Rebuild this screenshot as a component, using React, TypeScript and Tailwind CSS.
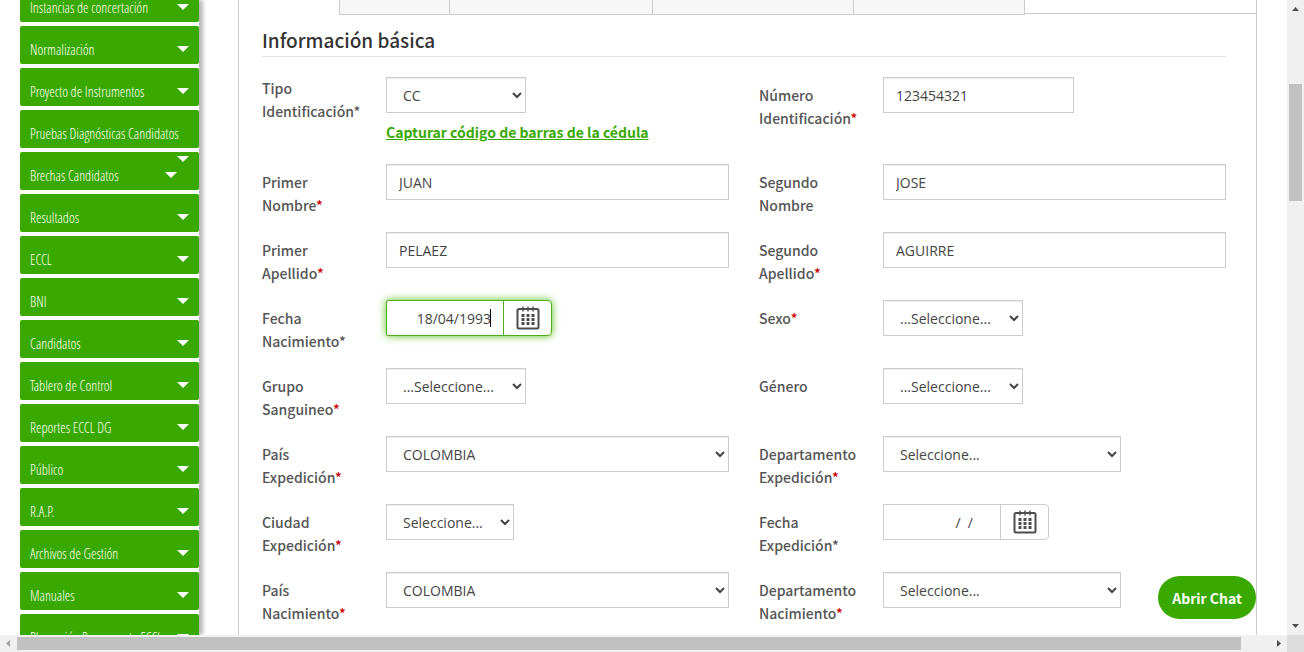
import { useId, type ReactNode } from "react";

const menu: { text: string; arrow?: "normal" | "none" | "double" }[] = [
  { text: "Instancias de concertación" },
  { text: "Normalización" },
  { text: "Proyecto de Instrumentos" },
  { text: "Pruebas Diagnósticas Candidatos", arrow: "none" },
  { text: "Brechas Candidatos", arrow: "double" },
  { text: "Resultados" },
  { text: "ECCL" },
  { text: "BNI" },
  { text: "Candidatos" },
  { text: "Tablero de Control" },
  { text: "Reportes ECCL DG" },
  { text: "Público" },
  { text: "R.A.P." },
  { text: "Archivos de Gestión" },
  { text: "Manuales" },
  { text: "Planeación Presupuesto ECCL" },
];

const box =
  "h-9 rounded-none border border-[#ccc] bg-white font-['Open_Sans',sans-serif] text-sm text-[#444] shadow-[inset_0_1px_1px_rgba(0,0,0,0.075)]";

function Caret() {
  return (
    <svg width="12" height="6" viewBox="0 0 12 6" fill="#fff" aria-hidden="true">
      <path d="M0 0h12L6 6z" />
    </svg>
  );
}

function Sidebar() {
  return (
    <nav className="ml-5 w-[179px] shrink-0 overflow-visible bg-white shadow-[4px_0_4px_#b8b8b8]">
      <ul className="-mt-4 flex flex-col gap-1">
        {menu.map(({ text, arrow = "normal" }) => (
          <li key={text} className="relative">
            <a
              href="#"
              className="flex h-[38px] items-center justify-between whitespace-nowrap rounded-xs bg-[#39a900] pl-2.5 pr-2.5 pt-2 font-['Open_Sans_Condensed_Light','Open_Sans_Condensed','Liberation_Sans_Narrow',sans-serif] text-sm font-light text-white"
            >
              <span className="pt-0.5">{text}</span>
              {arrow === "normal" && <Caret />}
              {arrow === "double" && (
                <span className="mr-3">
                  <Caret />
                </span>
              )}
            </a>
            {arrow === "double" && (
              <span className="absolute right-2.5 top-1 flex">
                <Caret />
              </span>
            )}
          </li>
        ))}
      </ul>
    </nav>
  );
}

interface FieldProps {
  label: [string, string?];
  star?: "red" | "plain";
  top?: boolean;
  children: (id: string) => ReactNode;
}

function Field({ label, star, top, children }: FieldProps) {
  const id = useId();
  return (
    <div className="flex min-w-0">
      <label
        htmlFor={id}
        className={`w-[124px] shrink-0 font-['Noto_Sans_CJK_SC',sans-serif] text-sm font-medium leading-[23px] text-[#555] ${top ? "" : "pt-[7px]"}`}
      >
        {label[0]}
        {label[1] && <br />}
        {label[1]}
        {star && <span className={star === "red" ? "text-[#c00]" : ""}>*</span>}
      </label>
      <div className="min-w-0 flex-1">{children(id)}</div>
    </div>
  );
}

function Select({ id, value, width }: { id: string; value: string; width: string }) {
  return (
    <select id={id} className={`${box} ${width} block pl-3 pr-0.5`}>
      <option>{value}</option>
    </select>
  );
}

function Text({ id, value, width = "w-full" }: { id: string; value: string; width?: string }) {
  return <input id={id} type="text" defaultValue={value} className={`${box} ${width} block px-3`} />;
}

function Calendar() {
  return (
    <svg width="24" height="24" viewBox="0 0 24 24" aria-hidden="true">
      <rect x="1.5" y="3" width="21" height="19.5" rx="1.5" fill="none" stroke="#4d4d4d" strokeWidth="2" />
      <path d="M7 .5v5M12 .5v5M17 .5v5" stroke="#4d4d4d" strokeWidth="1.4" />
      <path
        d="M5.5 8h3v3h-3zM10.5 8h3v3h-3zM15.5 8h3v3h-3zM5.5 12h3v3h-3zM10.5 12h3v3h-3zM15.5 12h3v3h-3zM5.5 16h3v3h-3zM10.5 16h3v3h-3zM15.5 16h3v3h-3z"
        fill="#4d4d4d"
      />
    </svg>
  );
}

function DateField({ id, value, active }: { id: string; value: string; active?: boolean }) {
  return (
    <div
      className={`flex h-9 w-[166px] rounded-r border bg-white ${active ? "rounded-l-xs border-[#4cae1a] shadow-[0_0_8px_#5cc01f]" : "border-[#ccc]"}`}
    >
      <div className={`relative w-[117px] border-r ${active ? "border-[#4cae1a]" : "border-[#ccc]"}`}>
        <input
          id={id}
          type="text"
          defaultValue={value}
          className={`h-full w-full whitespace-pre bg-transparent text-right font-['Open_Sans',sans-serif] text-sm text-[#444] outline-none ${active ? "px-3" : "px-[27px]"}`}
        />
        {active && <span className="absolute right-3 top-2 h-[18px] w-px bg-black" />}
      </div>
      <button type="button" aria-label="Calendario" className="flex flex-1 items-center justify-center">
        <Calendar />
      </button>
    </div>
  );
}

function Row({ first, children }: { first?: boolean; children: ReactNode }) {
  return (
    <div className={`grid grid-cols-2 gap-[30px] ${first ? "min-h-[87px]" : "min-h-[68px]"}`}>{children}</div>
  );
}

function Form() {
  return (
    <form className="pt-5">
      <Row first>
        <Field label={["Tipo", "Identificación"]} star="plain" top>
          {(id) => (
            <>
              <Select id={id} value="CC" width="w-[140px]" />
              <a
                href="#"
                className="mt-2 block whitespace-nowrap font-['Noto_Sans_CJK_SC',sans-serif] text-sm font-bold leading-[23px] text-[#39a900] underline"
              >
                Capturar código de barras de la cédula
              </a>
            </>
          )}
        </Field>
        <Field label={["Número", "Identificación"]} star="red">
          {(id) => <Text id={id} value="123454321" width="w-[191px]" />}
        </Field>
      </Row>
      <Row>
        <Field label={["Primer", "Nombre"]} star="red">{(id) => <Text id={id} value="JUAN" />}</Field>
        <Field label={["Segundo", "Nombre"]}>{(id) => <Text id={id} value="JOSE" />}</Field>
      </Row>
      <Row>
        <Field label={["Primer", "Apellido"]} star="red">{(id) => <Text id={id} value="PELAEZ" />}</Field>
        <Field label={["Segundo", "Apellido"]} star="red">{(id) => <Text id={id} value="AGUIRRE" />}</Field>
      </Row>
      <Row>
        <Field label={["Fecha", "Nacimiento"]} star="plain">
          {(id) => <DateField id={id} value="18/04/1993" active />}
        </Field>
        <Field label={["Sexo"]} star="red">
          {(id) => <Select id={id} value="...Seleccione..." width="w-[140px]" />}
        </Field>
      </Row>
      <Row>
        <Field label={["Grupo", "Sanguineo"]} star="red">
          {(id) => <Select id={id} value="...Seleccione..." width="w-[140px]" />}
        </Field>
        <Field label={["Género"]}>{(id) => <Select id={id} value="...Seleccione..." width="w-[140px]" />}</Field>
      </Row>
      <Row>
        <Field label={["País", "Expedición"]} star="red">
          {(id) => <Select id={id} value="COLOMBIA" width="w-full" />}
        </Field>
        <Field label={["Departamento", "Expedición"]} star="red">
          {(id) => <Select id={id} value="Seleccione..." width="w-[238px]" />}
        </Field>
      </Row>
      <Row>
        <Field label={["Ciudad", "Expedición"]} star="red">
          {(id) => <Select id={id} value="Seleccione..." width="w-[128px]" />}
        </Field>
        <Field label={["Fecha", "Expedición"]} star="plain">{(id) => <DateField id={id} value="/  /" />}</Field>
      </Row>
      <Row>
        <Field label={["País", "Nacimiento"]} star="red">
          {(id) => <Select id={id} value="COLOMBIA" width="w-full" />}
        </Field>
        <Field label={["Departamento", "Nacimiento"]} star="red">
          {(id) => <Select id={id} value="Seleccione..." width="w-[238px]" />}
        </Field>
      </Row>
    </form>
  );
}

function Tabs() {
  return (
    <div className="flex h-[15px]" aria-hidden="true">
      <div className="w-[100px]" />
      <div className="w-[110px] border-b border-l border-[#ccc] bg-[#f7f7f7]" />
      <div className="w-[203px] border-b border-l border-[#ccc] bg-[#f7f7f7]" />
      <div className="w-[201px] border-b border-l border-[#ccc] bg-[#f7f7f7]" />
      <div className="w-[172px] border-x border-b border-[#ccc] bg-[#f7f7f7]" />
      <div className="mb-px flex-1 border-b border-[#ccc]" />
    </div>
  );
}

function VerticalScroll() {
  return (
    <div className="flex w-[17px] shrink-0 flex-col items-center bg-[#f0f0f0]" aria-hidden="true">
      <svg width="17" height="17" viewBox="0 0 17 17" fill="#505050">
        <path d="M5 11h7L8.500 7z" />
      </svg>
      <div className="flex w-[13px] flex-1 flex-col">
        <div className="h-[67px]" />
        <div className="h-[117px] bg-[#c1c1c1]" />
      </div>
      <svg width="17" height="17" viewBox="0 0 17 17" fill="#505050">
        <path d="M5 6h7l-3.500 4z" />
      </svg>
    </div>
  );
}

function HorizontalScroll() {
  return (
    <div className="flex h-[17px] shrink-0 items-center bg-[#f0f0f0]" aria-hidden="true">
      <svg width="17" height="17" viewBox="0 0 17 17" fill="#a3a3a3">
        <path d="M10 5v7L6 8.500z" />
      </svg>
      <div className="h-[13px] flex-1 bg-[#c1c1c1]" />
      <div className="w-[29px]" />
      <svg width="17" height="17" viewBox="0 0 17 17" fill="#505050">
        <path d="M7 5v7l4-3.500z" />
      </svg>
      <div className="h-[17px] w-[17px] bg-[#dcdcdc]" />
    </div>
  );
}

export default function App() {
  return (
    <div className="relative flex h-screen flex-col overflow-hidden bg-white">
      <div className="flex min-h-0 flex-1 overflow-hidden">
        <Sidebar />
        <main className="ml-[39px] mr-[30px] min-w-0 flex-1 border-x border-[#ccc]">
          <Tabs />
          <section className="pl-[23px] pr-[30px]">
            <h2 className="border-b border-[#e3e3e3] pb-1 pt-[13px] font-['Noto_Sans_CJK_SC',sans-serif] text-[19px] font-medium leading-6 text-[#333]">
              Información básica
            </h2>
            <Form />
          </section>
        </main>
        <VerticalScroll />
      </div>
      <HorizontalScroll />
      <button
        type="button"
        className="absolute bottom-[33px] right-12 h-[43px] w-[98px] rounded-full bg-[#39a900] font-['Noto_Sans_CJK_SC',sans-serif] text-sm font-bold text-white"
      >
        Abrir Chat
      </button>
    </div>
  );
}
